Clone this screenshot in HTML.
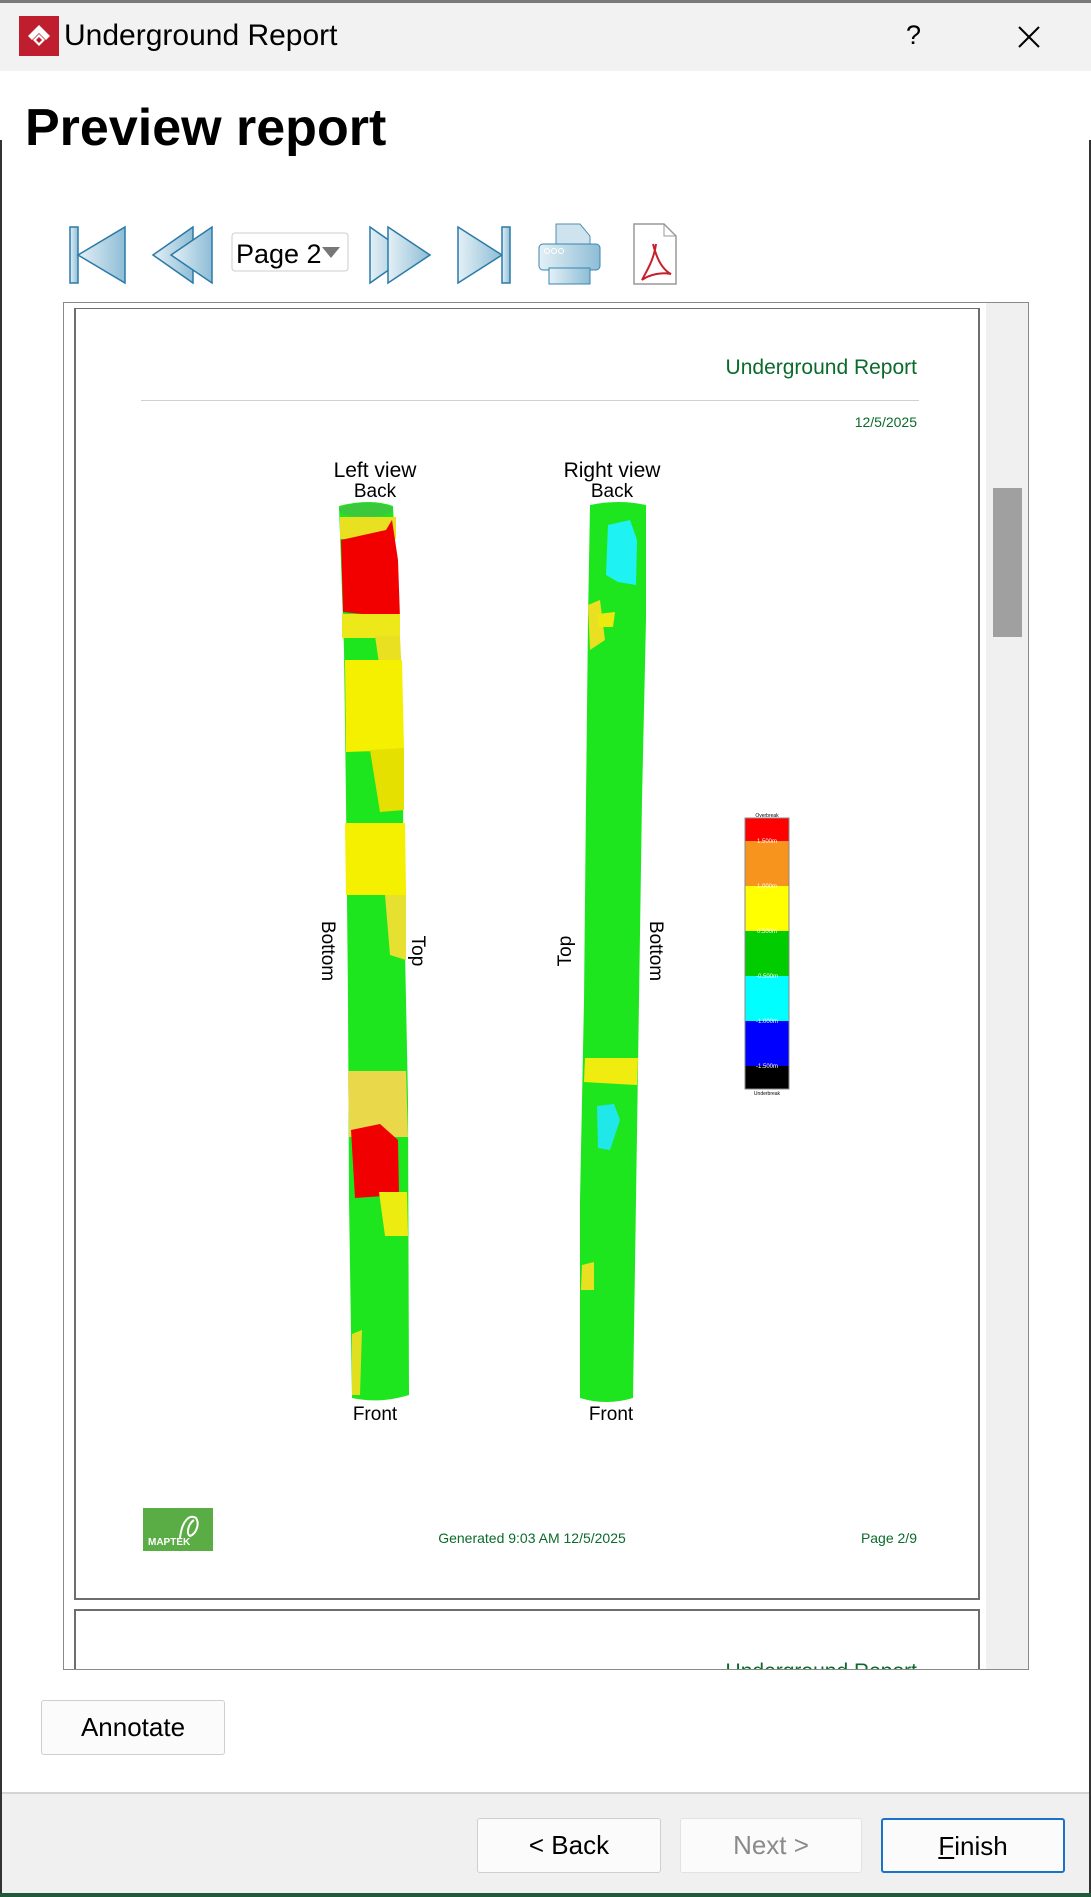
<!DOCTYPE html>
<html><head><meta charset="utf-8"><style>
*{margin:0;padding:0;box-sizing:border-box}
body{width:1091px;height:1897px;position:relative;background:#fff;font-family:"Liberation Sans",sans-serif;overflow:hidden}
.a{position:absolute}
.btn{position:absolute;background:#fbfbfb;border:1px solid #cfcfcf;border-radius:3px;font-size:26px;text-align:center;line-height:52px;color:#000}
.g{color:#0b6b2a}
</style></head><body>
<div class="a" style="left:0;top:0;width:1091px;height:3px;background:#7a7a7a"></div>
<div class="a" style="left:0;top:3px;width:1091px;height:68px;background:#f2f2f2"></div>
<div class="a" style="left:0;top:140px;width:2px;height:1757px;background:#333"></div>
<div class="a" style="left:1089px;top:140px;width:2px;height:1757px;background:#333"></div>
<div class="a" style="left:0;top:1893px;width:1091px;height:4px;background:#1f5a3a"></div>
<svg class="a" style="left:19px;top:16px" width="40" height="40" viewBox="0 0 40 40"><rect width="40" height="40" fill="#be1e2d"/><path d="M20 9 L31 20 L27 24 L20 17 L13 24 L9 20 Z" fill="#fff"/><path d="M14 24 L20 18 L26 24 L20 30 Z" fill="#fff"/><path d="M17 24 L20 21 L23 24 L20 27Z" fill="#be1e2d"/></svg>
<div class="a" style="left:64px;top:19px;font-size:30px">Underground Report</div>
<div class="a" style="left:906px;top:20px;font-size:27px">?</div>
<svg class="a" style="left:1018px;top:26px" width="22" height="22"><path d="M1 1L21 21M21 1L1 21" stroke="#000" stroke-width="2"/></svg>
<div class="a" style="left:25px;top:98px;font-size:52px;font-weight:bold">Preview report</div>

<!-- toolbar -->
<svg class="a" style="left:60px;top:220px" width="630" height="70">
<defs><linearGradient id="bg" x1="0" x2="1"><stop offset="0" stop-color="#e4f0f6"/><stop offset="1" stop-color="#8ebdd6"/></linearGradient></defs>
<rect x="10" y="7" width="8" height="56" fill="url(#bg)" stroke="#2a7aa8" stroke-width="1.5"/>
<path d="M18 35 L65 7 L65 63 Z" fill="url(#bg)" stroke="#2a7aa8" stroke-width="1.5"/>
<path d="M93 35 L133 7 L133 63 Z" fill="url(#bg)" stroke="#2a7aa8" stroke-width="1.5"/>
<path d="M111 35 L152 7 L152 63 Z" fill="url(#bg)" stroke="#2a7aa8" stroke-width="1.5"/>
<rect x="172" y="13" width="116" height="38" rx="3" fill="#fff" stroke="#ccc"/>
<text x="176" y="43" font-size="27" font-family="Liberation Sans">Page 2</text>
<path d="M262 27 L280 27 L271 38Z" fill="#777"/>
<path d="M310 7 L350 35 L310 63 Z" fill="url(#bg)" stroke="#2a7aa8" stroke-width="1.5"/>
<path d="M328 7 L370 35 L328 63 Z" fill="url(#bg)" stroke="#2a7aa8" stroke-width="1.5"/>
<path d="M398 7 L442 35 L398 63 Z" fill="url(#bg)" stroke="#2a7aa8" stroke-width="1.5"/>
<rect x="442" y="7" width="8" height="56" fill="url(#bg)" stroke="#2a7aa8" stroke-width="1.5"/>
<path d="M496 4 L520 4 L530 16 L530 28 L496 28Z" fill="#cfe3ee" stroke="#4f8fb3"/>
<rect x="479" y="24" width="61" height="26" rx="4" fill="url(#bg)" stroke="#3a86b0"/>
<circle cx="487" cy="31" r="2.5" fill="none" stroke="#fff"/><circle cx="494" cy="31" r="2.5" fill="none" stroke="#fff"/><circle cx="501" cy="31" r="2.5" fill="none" stroke="#fff"/>
<rect x="489" y="48" width="41" height="16" fill="url(#bg)" stroke="#3a86b0"/>
<path d="M574 4 L604 4 L616 16 L616 64 L574 64Z" fill="#fff" stroke="#999" stroke-width="1.5"/>
<path d="M604 4 L604 16 L616 16" fill="none" stroke="#999"/>
<path d="M593 24 C597 40 603 50 611 54 C603 52 590 54 582 60 C586 52 594 40 596 24" fill="none" stroke="#c8202a" stroke-width="2"/>
</svg>

<!-- preview frame -->
<div class="a" style="left:63px;top:302px;width:966px;height:1368px;border:1px solid #8a8a8a;background:#fff;overflow:hidden">
 <div class="a" style="left:922px;top:0;width:42px;height:1366px;background:#f0f0f0"></div>
 <div class="a" style="left:929px;top:185px;width:29px;height:149px;background:#a0a0a0"></div>
 <div class="a" style="left:10px;top:5px;width:906px;height:1292px;border:2px solid #6d6d6d;border-top-width:1px"></div>
 <div class="a" style="left:10px;top:1306px;width:906px;height:100px;border:2px solid #6d6d6d;border-bottom:none"></div>
 <div class="a g" style="left:640px;top:1357px;width:213px;text-align:right;font-size:21px">Underground Report</div>
</div>
<div class="a g" style="left:640px;top:356px;width:277px;text-align:right;font-size:21px">Underground Report</div>
<div class="a" style="left:141px;top:400px;width:778px;height:1px;background:#d0d0d0"></div>
<div class="a g" style="left:800px;top:414px;width:117px;text-align:right;font-size:14px">12/5/2025</div>
<div class="a" style="left:300px;top:459px;width:150px;text-align:center;font-size:21px">Left view</div>
<div class="a" style="left:300px;top:481px;width:150px;text-align:center;font-size:19px">Back</div>
<div class="a" style="left:537px;top:459px;width:150px;text-align:center;font-size:21px">Right view</div>
<div class="a" style="left:537px;top:481px;width:150px;text-align:center;font-size:19px">Back</div>
<div class="a" style="left:300px;top:1404px;width:150px;text-align:center;font-size:19px">Front</div>
<div class="a" style="left:536px;top:1404px;width:150px;text-align:center;font-size:19px">Front</div>
<div class="a" style="left:287px;top:940px;width:80px;text-align:center;font-size:19px;transform:rotate(90deg)">Bottom</div>
<div class="a" style="left:377px;top:940px;width:80px;text-align:center;font-size:19px;transform:rotate(90deg)">Top</div>
<div class="a" style="left:526px;top:940px;width:80px;text-align:center;font-size:19px;transform:rotate(-90deg)">Top</div>
<div class="a" style="left:615px;top:940px;width:80px;text-align:center;font-size:19px;transform:rotate(90deg)">Bottom</div>

<svg class="a" style="left:0;top:0" width="1091" height="1897">
<!-- left cylinder -->
<path d="M339 506 Q370 498 393 506 L398 620 L402 700 L404 900 L408 1100 L409 1395 Q380 1404 352 1398 L349 1200 L348 1000 L346 800 L344 650 Z" fill="#1ee61e"/>
<ellipse cx="366" cy="510" rx="27" ry="7" fill="#3cc83c"/>
<rect x="340" y="517" width="56" height="22" fill="#e8e020"/>
<path d="M341 540 L386 530 L392 520 L398 560 L400 618 L343 612Z" fill="#f20000"/>
<rect x="342" y="614" width="58" height="24" fill="#ece81a"/>
<path d="M375 636 L400 636 L402 680 L380 670Z" fill="#e8e020"/>
<path d="M345 660 L402 660 L404 750 L346 752Z" fill="#f4f000"/>
<path d="M370 750 L404 748 L404 810 L380 812Z" fill="#e6e000"/>
<path d="M345 823 L405 823 L406 895 L346 895Z" fill="#f4f000"/>
<path d="M385 895 L406 895 L406 960 L390 955Z" fill="#e6e030"/>
<path d="M348 1071 L406 1071 L408 1137 L349 1137Z" fill="#e9d84a"/>
<path d="M351 1130 L380 1124 L398 1140 L399 1195 L355 1198Z" fill="#f00000"/>
<path d="M379 1192 L407 1192 L408 1236 L385 1236Z" fill="#ecec10"/>
<path d="M352 1334 L362 1330 L360 1395 L352 1395Z" fill="#e0e020"/>
<!-- right cylinder -->
<path d="M590 505 Q618 499 646 505 L646 620 L642 800 L639 1000 L636 1200 L633 1398 Q606 1406 580 1398 L580 1200 L584 1000 L586 800 L588 620 Z" fill="#1ee61e"/>
<path d="M608 525 L630 520 L637 540 L636 585 L618 582 L606 575Z" fill="#1ef2f2"/>
<path d="M588 605 L600 600 L605 640 L590 650Z" fill="#e8e020"/>
<path d="M598 614 L615 612 L613 627 L598 627Z" fill="#eaea10"/>
<path d="M585 1058 L638 1058 L637 1085 L584 1082Z" fill="#f0ec10"/>
<path d="M597 1106 L614 1104 L620 1120 L610 1150 L598 1148Z" fill="#20e8e8"/>
<path d="M582 1265 L594 1262 L594 1290 L581 1290Z" fill="#e8e020"/>
<!-- legend -->
<rect x="745" y="818" width="44" height="23" fill="#f00"/>
<rect x="745" y="841" width="44" height="45" fill="#f7941d"/>
<rect x="745" y="886" width="44" height="45" fill="#ff0"/>
<rect x="745" y="931" width="44" height="45" fill="#0c0"/>
<rect x="745" y="976" width="44" height="45" fill="#0ff"/>
<rect x="745" y="1021" width="44" height="45" fill="#00f"/>
<rect x="745" y="1066" width="44" height="23" fill="#000"/>
<rect x="745" y="818" width="44" height="271" fill="none" stroke="#888" stroke-width="1"/>
<g font-size="5" font-family="Liberation Sans" text-anchor="middle" fill="#000"><text x="767" y="817">Overbreak</text><text x="767" y="1095">Underbreak</text></g>
<g font-size="6" font-family="Liberation Sans" text-anchor="middle" fill="#fff"><text x="767" y="843">1.500m</text><text x="767" y="888">1.000m</text><text x="767" y="933">0.500m</text><text x="767" y="978">-0.500m</text><text x="767" y="1023">-1.000m</text><text x="767" y="1068">-1.500m</text></g>
<!-- logo -->
<rect x="143" y="1508" width="70" height="43" fill="#5aac44"/>
<path d="M180 1538 C182 1520 190 1514 196 1518 C200 1524 196 1534 190 1536 C186 1534 188 1524 194 1520" fill="none" stroke="#fff" stroke-width="2"/>
<text x="148" y="1545" font-size="10" font-weight="bold" fill="#fff" font-family="Liberation Sans">MAPTEK</text>
</svg>
<div class="a g" style="left:382px;top:1530px;width:300px;text-align:center;font-size:14px">Generated 9:03 AM 12/5/2025</div>
<div class="a g" style="left:800px;top:1530px;width:117px;text-align:right;font-size:14px">Page 2/9</div>

<div class="btn" style="left:41px;top:1700px;width:184px;height:55px">Annotate</div>
<div class="a" style="left:2px;top:1792px;width:1087px;height:101px;background:#f0f0f0;border-top:2px solid #d4d4d4"></div>
<div class="btn" style="left:477px;top:1818px;width:184px;height:55px">&lt; Back</div>
<div class="btn" style="left:680px;top:1818px;width:182px;height:55px;color:#8a8a8a;border-color:#e2e2e2">Next &gt;</div>
<div class="btn" style="left:881px;top:1818px;width:184px;height:55px;border:2px solid #1a73c8"><u>F</u>inish</div>
</body></html>
